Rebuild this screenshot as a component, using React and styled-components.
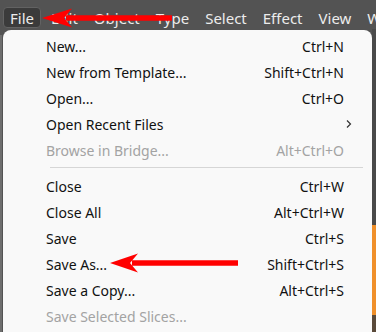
import React from "react";
import styled, { createGlobalStyle } from "styled-components";

const GlobalStyle = createGlobalStyle`
  html, body {
    margin: 0;
    padding: 0;
    background: #535353;
  }
  body {
    font-family: "Noto Sans", "Open Sans", sans-serif;
  }
`;

const Page = styled.div`
  position: relative;
  width: 376px;
  height: 332px;
  overflow: hidden;
  background: #535353;
  display: flex;
  flex-direction: column;
`;

const MenuBar = styled.div`
  height: 29px;
  display: flex;
  align-items: flex-end;
  padding: 0 0 1px 3px;
  box-sizing: border-box;
  flex-shrink: 0;
  overflow: hidden;
`;

const BarItem = styled.div`
  height: 21px;
  display: flex;
  align-items: center;
  padding: 0 6px;
  margin-right: ${(p) => p.gap || 0}px;
  font-size: 15px;
  color: #ececec;
  white-space: nowrap;
  border-radius: 4px;
  box-sizing: border-box;
  background: ${(p) => (p.active ? "#3b3b3b" : "transparent")};
  border: 1px solid ${(p) => (p.active ? "#626262" : "transparent")};
`;

const Body = styled.div`
  flex: 1;
  display: flex;
  min-height: 0;
`;

const LeftEdge = styled.div`
  width: 2px;
  background: #6e6e6e;
  margin-top: 6px;
`;

const Panel = styled.div`
  flex: 1;
  background: #f9f9f9;
  border-radius: 8px 8px 0 0;
  padding-top: 3px;
  margin-top: 1px;
  margin-left: 1px;
`;

const SideStrip = styled.div`
  width: 4px;
  display: flex;
  flex-direction: column;
`;

const StripPart = styled.div`
  height: ${(p) => p.h}px;
  flex: ${(p) => (p.grow ? 1 : "none")};
  background: ${(p) => p.color};
`;

const Row = styled.div`
  height: 26px;
  display: flex;
  align-items: center;
  padding: 0 28px 0 43px;
  font-size: 14px;
  color: ${(p) => (p.disabled ? "#a3a3a3" : "#111111")};
`;

const Label = styled.span`
  flex: 1;
  white-space: nowrap;
`;

const Shortcut = styled.span`
  white-space: nowrap;
`;

const Chevron = styled.span`
  display: flex;
  align-items: center;
  margin-right: -9px;
  color: #333;
`;

const Separator = styled.div`
  height: 1px;
  background: #d6d6d6;
  margin: 4px 9px 5px 47px;
`;

const Overlay = styled.svg`
  position: absolute;
  left: 0;
  top: 0;
  pointer-events: none;
`;

const barItems = [
  { name: "File", active: true, gap: 3 },
  { name: "Edit", gap: 2 },
  { name: "Object", gap: 2 },
  { name: "Type", gap: 2 },
  { name: "Select", gap: 2 },
  { name: "Effect", gap: 2 },
  { name: "View", gap: 2 },
  { name: "Window" },
];

const groupA = [
  { label: "New...", key: "Ctrl+N" },
  { label: "New from Template...", key: "Shift+Ctrl+N" },
  { label: "Open...", key: "Ctrl+O" },
  { label: "Open Recent Files", sub: true },
  { label: "Browse in Bridge...", key: "Alt+Ctrl+O", disabled: true },
];

const groupB = [
  { label: "Close", key: "Ctrl+W" },
  { label: "Close All", key: "Alt+Ctrl+W" },
  { label: "Save", key: "Ctrl+S" },
  { label: "Save As...", key: "Shift+Ctrl+S" },
  { label: "Save a Copy...", key: "Alt+Ctrl+S" },
  { label: "Save Selected Slices...", disabled: true },
];

const MenuRow = ({ item }) => (
  <Row disabled={item.disabled}>
    <Label>{item.label}</Label>
    {item.key && <Shortcut>{item.key}</Shortcut>}
    {item.sub && (
      <Chevron>
        <svg width="8" height="10" viewBox="0 0 8 10">
          <path d="M2 1.5 L5.5 5 L2 8.5" fill="none" stroke="#333" strokeWidth="1.2" />
        </svg>
      </Chevron>
    )}
  </Row>
);

const Arrow = ({ tipX, y, tailX, headLen = 30, half = 9.5, thick = 5.5 }) => (
  <g fill="#ff0000">
    <rect x={tipX + headLen - 6} y={y - thick / 2} width={tailX - tipX - headLen + 6} height={thick} />
    <polygon
      points={`${tipX},${y} ${tipX + headLen},${y - half} ${tipX + headLen - 8},${y} ${tipX + headLen},${y + half}`}
    />
  </g>
);

export default function App() {
  return (
    <>
      <GlobalStyle />
      <Page>
        <MenuBar>
          {barItems.map((b) => (
            <BarItem key={b.name} active={b.active} gap={b.gap}>
              {b.name}
            </BarItem>
          ))}
        </MenuBar>
        <Body>
          <LeftEdge />
          <Panel>
            {groupA.map((it) => (
              <MenuRow key={it.label} item={it} />
            ))}
            <Separator />
            {groupB.map((it) => (
              <MenuRow key={it.label} item={it} />
            ))}
          </Panel>
          <SideStrip>
            <StripPart h={196} color="#4a4a4a" />
            <StripPart h={90} color="#f0902a" />
            <StripPart grow color="#5a4a3a" />
          </SideStrip>
        </Body>
        <Overlay width="376" height="332">
          <Arrow tipX={42} y={18} tailX={172} />
          <Arrow tipX={110} y={263} tailX={238} headLen={28} />
        </Overlay>
      </Page>
    </>
  );
}
